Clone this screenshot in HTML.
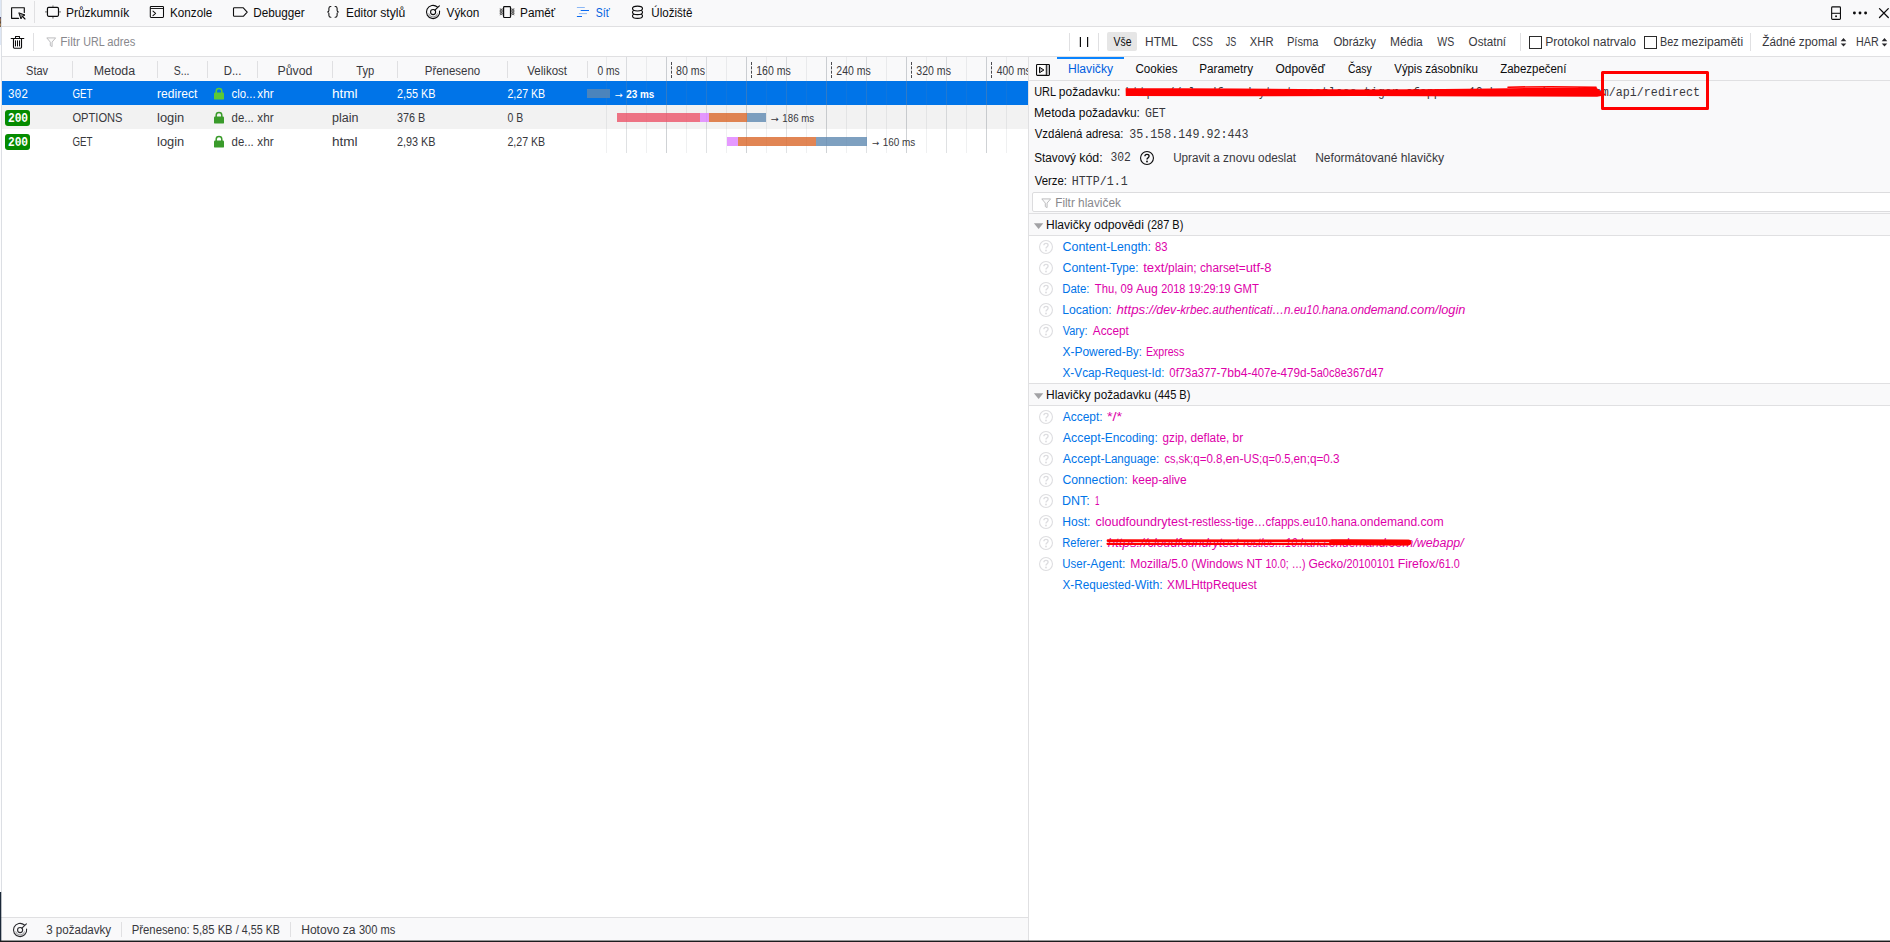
<!DOCTYPE html>
<html lang="cs">
<head>
<meta charset="utf-8">
<title>Síť – Nástroje pro vývojáře</title>
<style>
html,body{margin:0;padding:0;}
body{width:1890px;height:942px;overflow:hidden;position:relative;background:#fff;font-family:"Liberation Sans",sans-serif;font-size:12px;}
.b{position:absolute;}
#txt span{position:absolute;white-space:pre;line-height:16px;height:16px;transform-origin:0 50%;}
#txt u{display:inline-block;text-decoration:none;transform-origin:0 50%;white-space:pre;}
svg{position:absolute;overflow:visible;}
.ln{position:absolute;background:#e0e0e2;}
</style>
</head>
<body>
<!-- backgrounds -->
<div class="b" style="left:0;top:0;width:1890px;height:26px;background:#f9f9fa"></div>
<div class="ln" style="left:0;top:26px;width:1890px;height:1px"></div>
<div class="b" style="left:0;top:27px;width:1890px;height:29px;background:#fff"></div>
<div class="ln" style="left:0;top:56px;width:1890px;height:1px"></div>
<!-- request list header -->
<div class="b" style="left:0;top:57px;width:1028px;height:24px;background:#f9f9fa"></div>
<!-- rows -->
<div class="b" style="left:2px;top:81px;width:1026px;height:24px;background:#0074e8"></div>
<div class="b" style="left:2px;top:105px;width:1026px;height:24px;background:#f2f2f2"></div>
<div class="b" style="left:606px;top:57px;width:1px;height:96px;background:rgba(128,136,144,0.125)"></div>
<div class="b" style="left:626px;top:57px;width:1px;height:96px;background:rgba(128,136,144,0.25)"></div>
<div class="b" style="left:646px;top:57px;width:1px;height:96px;background:rgba(128,136,144,0.125)"></div>
<div class="b" style="left:666px;top:57px;width:1px;height:96px;background:rgba(128,136,144,0.376)"></div>
<div class="b" style="left:686px;top:57px;width:1px;height:96px;background:rgba(128,136,144,0.125)"></div>
<div class="b" style="left:706px;top:57px;width:1px;height:96px;background:rgba(128,136,144,0.25)"></div>
<div class="b" style="left:726px;top:57px;width:1px;height:96px;background:rgba(128,136,144,0.125)"></div>
<div class="b" style="left:746px;top:57px;width:1px;height:96px;background:rgba(128,136,144,0.376)"></div>
<div class="b" style="left:766px;top:57px;width:1px;height:96px;background:rgba(128,136,144,0.125)"></div>
<div class="b" style="left:786px;top:57px;width:1px;height:96px;background:rgba(128,136,144,0.25)"></div>
<div class="b" style="left:806px;top:57px;width:1px;height:96px;background:rgba(128,136,144,0.125)"></div>
<div class="b" style="left:826px;top:57px;width:1px;height:96px;background:rgba(128,136,144,0.376)"></div>
<div class="b" style="left:846px;top:57px;width:1px;height:96px;background:rgba(128,136,144,0.125)"></div>
<div class="b" style="left:866px;top:57px;width:1px;height:96px;background:rgba(128,136,144,0.25)"></div>
<div class="b" style="left:886px;top:57px;width:1px;height:96px;background:rgba(128,136,144,0.125)"></div>
<div class="b" style="left:906px;top:57px;width:1px;height:96px;background:rgba(128,136,144,0.376)"></div>
<div class="b" style="left:926px;top:57px;width:1px;height:96px;background:rgba(128,136,144,0.125)"></div>
<div class="b" style="left:946px;top:57px;width:1px;height:96px;background:rgba(128,136,144,0.25)"></div>
<div class="b" style="left:966px;top:57px;width:1px;height:96px;background:rgba(128,136,144,0.125)"></div>
<div class="b" style="left:986px;top:57px;width:1px;height:96px;background:rgba(128,136,144,0.376)"></div>
<div class="b" style="left:1006px;top:57px;width:1px;height:96px;background:rgba(128,136,144,0.125)"></div>
<div class="b" style="left:671px;top:62px;width:0;height:16px;border-left:1px dashed #4a4a4f"></div>
<div class="b" style="left:751px;top:62px;width:0;height:16px;border-left:1px dashed #4a4a4f"></div>
<div class="b" style="left:831px;top:62px;width:0;height:16px;border-left:1px dashed #4a4a4f"></div>
<div class="b" style="left:911px;top:62px;width:0;height:16px;border-left:1px dashed #4a4a4f"></div>
<div class="b" style="left:991px;top:62px;width:0;height:16px;border-left:1px dashed #4a4a4f"></div>
<div class="b" style="left:587px;top:89px;width:23px;height:9px;background:rgba(94,136,176,0.8)"></div>
<div class="b" style="left:617px;top:113px;width:83px;height:9px;background:rgba(235,83,104,0.8)"></div>
<div class="b" style="left:700px;top:113px;width:9px;height:9px;background:rgba(223,128,255,0.8)"></div>
<div class="b" style="left:709px;top:113px;width:38px;height:9px;background:rgba(217,102,41,0.8)"></div>
<div class="b" style="left:747px;top:113px;width:19px;height:9px;background:rgba(94,136,176,0.8)"></div>
<div class="b" style="left:727px;top:137px;width:11px;height:9px;background:rgba(223,128,255,0.8)"></div>
<div class="b" style="left:738px;top:137px;width:78px;height:9px;background:rgba(217,102,41,0.8)"></div>
<div class="b" style="left:816px;top:137px;width:51px;height:9px;background:rgba(94,136,176,0.8)"></div>
<!-- header dividers -->
<div class="ln" style="left:72px;top:61px;width:1px;height:17px"></div>
<div class="ln" style="left:157px;top:61px;width:1px;height:17px"></div>
<div class="ln" style="left:207px;top:61px;width:1px;height:17px"></div>
<div class="ln" style="left:257px;top:61px;width:1px;height:17px"></div>
<div class="ln" style="left:332px;top:61px;width:1px;height:17px"></div>
<div class="ln" style="left:397px;top:61px;width:1px;height:17px"></div>
<div class="ln" style="left:507px;top:61px;width:1px;height:17px"></div>
<div class="ln" style="left:587px;top:61px;width:1px;height:17px"></div>
<!-- status bar -->
<div class="ln" style="left:0;top:917px;width:1028px;height:1px"></div>
<div class="b" style="left:0;top:918px;width:1028px;height:23px;background:#f9f9fa"></div>
<div class="ln" style="left:121px;top:922px;width:1px;height:15px"></div>
<div class="ln" style="left:290px;top:922px;width:1px;height:15px"></div>
<!-- details panel -->
<div class="b" style="left:1029px;top:57px;width:861px;height:23px;background:#f9f9fa"></div>
<div class="ln" style="left:1029px;top:80px;width:861px;height:1px"></div>
<div class="b" style="left:1029px;top:81px;width:861px;height:132px;background:#f9f9fa"></div>
<div class="b" style="left:1057px;top:57px;width:67px;height:2px;background:#0a84ff"></div>
<div class="b" style="left:1032px;top:192px;width:870px;height:20px;background:#fff;border:1px solid #dcdcde;border-radius:2px;box-sizing:border-box"></div>
<div class="ln" style="left:1029px;top:213px;width:861px;height:1px"></div>
<div class="b" style="left:1029px;top:214px;width:861px;height:21px;background:#f9f9fa"></div>
<div class="ln" style="left:1029px;top:235px;width:861px;height:1px"></div>
<div class="ln" style="left:1029px;top:383px;width:861px;height:1px"></div>
<div class="b" style="left:1029px;top:384px;width:861px;height:21px;background:#f9f9fa"></div>
<div class="ln" style="left:1029px;top:405px;width:861px;height:1px"></div>
<div class="ln" style="left:1028px;top:57px;width:1px;height:884px"></div>
<!-- filter buttons -->
<div class="b" style="left:1107px;top:32px;width:30px;height:19px;background:#e6e6e6;border-radius:2px"></div>
<div class="ln" style="left:1069px;top:33px;width:1px;height:18px"></div>
<div class="ln" style="left:1098px;top:33px;width:1px;height:18px"></div>
<div class="ln" style="left:1520px;top:33px;width:1px;height:18px"></div>
<div class="ln" style="left:1750px;top:33px;width:1px;height:18px"></div>
<div class="ln" style="left:33px;top:33px;width:1px;height:18px"></div>
<div class="ln" style="left:34px;top:1px;width:1px;height:22px"></div>
<div class="b" style="left:1529px;top:36px;width:13px;height:13px;box-sizing:border-box;border:1px solid #2b2b2b;background:#fff"></div>
<div class="b" style="left:1644px;top:36px;width:13px;height:13px;box-sizing:border-box;border:1px solid #2b2b2b;background:#fff"></div>
<!-- status badges -->
<div class="b" style="left:5px;top:110px;width:25px;height:16px;background:#058b00;border-radius:3px"></div>
<div class="b" style="left:5px;top:134px;width:25px;height:16px;background:#058b00;border-radius:3px"></div>
<!-- left/bottom window edges -->
<div class="b" style="left:0;top:0;width:1px;height:892px;background:#fdfdfe"></div>
<div class="b" style="left:0;top:0;width:1px;height:45px;background:#dde6f4"></div>
<div class="b" style="left:0;top:17px;width:1px;height:10px;background:linear-gradient(#3a3f7a,#a07850 30%,#5a4a40 55%,#b08858 75%,#6a5a50)"></div>
<div class="b" style="left:1px;top:0;width:1px;height:892px;background:#dcdfe4"></div>
<div class="b" style="left:0;top:892px;width:1px;height:50px;background:#1b2838"></div>
<div class="b" style="left:1px;top:892px;width:1px;height:50px;background:rgba(27,40,56,0.3)"></div>
<div class="b" style="left:0;top:940px;width:1890px;height:1px;background:rgba(28,28,30,0.45)"></div>
<div class="b" style="left:0;top:941px;width:1890px;height:1px;background:#1c1c1e"></div>
<svg style="left:8px;top:4px" width="20" height="18" viewBox="0 0 20 18" ><path d="M10.6 14.3H3.6V3.7H16.3V8.4" fill="none" stroke="#0c0c0d" stroke-width="1.15" stroke-linejoin="round" stroke-linecap="round"/><path d="M10.8 8.8L17 11L14.4 12.3L13 14.9Z" fill="#8a8a8a" stroke="#0c0c0d" stroke-width="1" stroke-linejoin="round"/><path d="M14.6 12.5L17 15" stroke="#0c0c0d" stroke-width="1.1" stroke-linecap="round"/></svg>
<svg style="left:44px;top:4px" width="18" height="16" viewBox="0 0 18 16" ><rect x="3.45" y="3.45" width="11.05" height="8.85" rx="1.2" fill="none" stroke="#0c0c0d" stroke-width="1.2"/><path d="M8.95 1.4V3M8.95 12.9V14.5M1.2 7.9H2.9M15.1 7.9H16.8" stroke="#6a6a6a" stroke-width="1.1"/></svg>
<svg style="left:148px;top:4px" width="18" height="16" viewBox="0 0 18 16" ><rect x="2.3" y="2.5" width="13.2" height="10.9" rx="0.8" fill="none" stroke="#0c0c0d" stroke-width="1.05"/><path d="M2.3 4.5H15.5" stroke="#0c0c0d" stroke-width="0.9"/><path d="M5 7.1L7.6 9.3L5 11.6" fill="none" stroke="#0c0c0d" stroke-width="1.05" stroke-linecap="round" stroke-linejoin="round"/></svg>
<svg style="left:231px;top:4px" width="19" height="16" viewBox="0 0 19 16" ><path d="M3.3 3.8H12.3L16.2 8.05L12.3 12.3H3.3Q2.5 12.3 2.5 11.5V4.6Q2.5 3.8 3.3 3.8Z" fill="none" stroke="#0c0c0d" stroke-width="1.1" stroke-linejoin="round"/></svg>
<svg style="left:325px;top:4px" width="16" height="16" viewBox="0 0 16 16" ><path d="M5.9 2.5Q3.9 2.5 3.9 4.3V6.4Q3.9 7.9 2.2 7.9Q3.9 7.9 3.9 9.4V11.5Q3.9 13.3 5.9 13.3" fill="none" stroke="#0c0c0d" stroke-width="1.05" stroke-linecap="round"/><path d="M10.1 2.5Q12.1 2.5 12.1 4.3V6.4Q12.1 7.9 13.8 7.9Q12.1 7.9 12.1 9.4V11.5Q12.1 13.3 10.1 13.3" fill="none" stroke="#0c0c0d" stroke-width="1.05" stroke-linecap="round"/></svg>
<svg style="left:425px;top:4px" width="17" height="17" viewBox="0 0 17 17" ><path d="M12.4 3.0A6.6 6.6 0 1 0 14.6 7.0" fill="none" stroke="#0c0c0d" stroke-width="1.1" stroke-linecap="round"/><circle cx="8.1" cy="8.1" r="2.55" fill="none" stroke="#0c0c0d" stroke-width="1.1"/><path d="M9.9 6.2L14.4 1.8" stroke="#0c0c0d" stroke-width="1.1" stroke-linecap="round"/><path d="M3.7 9.4A4.5 4.5 0 0 0 12.5 9.4" fill="none" stroke="#0c0c0d" stroke-width="0.8" opacity="0.55"/><path d="M2.9 10.6A5.5 5.5 0 0 0 13.3 10.6" fill="none" stroke="#0c0c0d" stroke-width="0.7" opacity="0.4"/></svg>
<svg style="left:498px;top:4px" width="18" height="16" viewBox="0 0 18 16" ><rect x="5.6" y="2.6" width="6.9" height="10.9" rx="0.8" fill="none" stroke="#0c0c0d" stroke-width="1.2"/><path d="M1.8 4.6L4.8 6.2L1.8 7.8L4.8 9.4L1.8 11M16.3 4.6L13.3 6.2L16.3 7.8L13.3 9.4L16.3 11" fill="none" stroke="#555" stroke-width="0.9"/><path d="M4.8 4.6L1.8 6.2L4.8 7.8L1.8 9.4L4.8 11M13.3 4.6L16.3 6.2L13.3 7.8L16.3 9.4L13.3 11" fill="none" stroke="#555" stroke-width="0.9"/></svg>
<svg style="left:576px;top:4px" width="14" height="16" viewBox="0 0 14 16" ><path d="M0.9 3.5H8.8" stroke="#0a6af0" stroke-width="1" opacity="0.45"/><path d="M4.7 6.5H13" stroke="#0a6af0" stroke-width="1.05"/><path d="M2.9 9.6H11" stroke="#0a6af0" stroke-width="1" opacity="0.45"/><path d="M0.9 12.5H6" stroke="#0a6af0" stroke-width="1.05"/></svg>
<svg style="left:630px;top:4px" width="16" height="16" viewBox="0 0 16 16" ><ellipse cx="7.5" cy="11.9" rx="5.0" ry="2.45" fill="#f9f9fa" stroke="#0c0c0d" stroke-width="1.15"/><ellipse cx="7.5" cy="8.2" rx="5.0" ry="2.45" fill="#f9f9fa" stroke="#0c0c0d" stroke-width="1.15"/><ellipse cx="7.5" cy="4.5" rx="5.0" ry="2.45" fill="#f9f9fa" stroke="#0c0c0d" stroke-width="1.15"/></svg>
<svg style="left:9px;top:33px" width="18" height="18" viewBox="0 0 18 18" ><path d="M2.2 5.5H14.8" stroke="#0c0c0d" stroke-width="1.1" stroke-linecap="round"/><path d="M6.5 5.3V3.5H10.5V5.3" fill="none" stroke="#0c0c0d" stroke-width="1.05" stroke-linejoin="round"/><path d="M4.5 5.8V14.3Q4.5 15.2 5.4 15.2H11.6Q12.5 15.2 12.5 14.3V5.8" fill="none" stroke="#0c0c0d" stroke-width="1.15"/><path d="M6.5 7.4V13.4M8.5 7.4V13.4M10.5 7.4V13.4" stroke="#0c0c0d" stroke-width="1"/></svg>
<svg style="left:46.2px;top:36.9px" width="11" height="11" viewBox="0 0 11 11" ><path d="M0.8 0.9H9.6L6.1 5.1V9.6L4.3 8.6V5.1Z" fill="#fbfbfb" stroke="#b9b9bc" stroke-width="0.95" stroke-linejoin="round"/></svg>
<svg style="left:1041.2px;top:198.2px" width="11" height="11" viewBox="0 0 11 11" ><path d="M0.8 0.9H9.6L6.1 5.1V9.6L4.3 8.6V5.1Z" fill="#fbfbfb" stroke="#b9b9bc" stroke-width="0.95" stroke-linejoin="round"/></svg>
<svg style="left:1829px;top:4px" width="14" height="18" viewBox="0 0 14 18" ><rect x="2.65" y="2.85" width="8.8" height="12.5" rx="0.9" fill="none" stroke="#0c0c0d" stroke-width="1.1"/><path d="M2.65 9.3H11.45" stroke="#0c0c0d" stroke-width="1.05"/><circle cx="7.05" cy="12.3" r="0.95" fill="#0c0c0d"/></svg>
<svg style="left:1851px;top:9px" width="18" height="8" viewBox="0 0 18 8" ><circle cx="3.4" cy="4" r="1.45" fill="#0c0c0d"/><circle cx="9" cy="4" r="1.45" fill="#0c0c0d"/><circle cx="14.6" cy="4" r="1.45" fill="#0c0c0d"/></svg>
<svg style="left:1877px;top:6px" width="13" height="14" viewBox="0 0 13 14" ><path d="M2.5 2.6L11.3 11.5M11.3 2.6L2.5 11.5" stroke="#0c0c0d" stroke-width="1.3" stroke-linecap="round"/></svg>
<svg style="left:1078px;top:34px" width="12" height="16" viewBox="0 0 12 16" ><path d="M2.4 3V13M9.6 3V13" stroke="#0c0c0d" stroke-width="1.2"/></svg>
<svg style="left:1840.2px;top:37px" width="7" height="11" viewBox="0 0 7 11" ><path d="M3.5 0.9L6.3 4.2H0.7ZM3.5 9.5L6.3 6.6H0.7Z" fill="#2a2a2e"/></svg>
<svg style="left:1881.2px;top:37px" width="7" height="11" viewBox="0 0 7 11" ><path d="M3.5 0.9L6.3 4.2H0.7ZM3.5 9.5L6.3 6.6H0.7Z" fill="#2a2a2e"/></svg>
<svg style="left:1034px;top:62px" width="18" height="16" viewBox="0 0 18 16" ><rect x="2.55" y="2.55" width="12.9" height="10.85" rx="0.8" fill="#fff" stroke="#0c0c0d" stroke-width="1.1"/><rect x="12.6" y="3.1" width="2.3" height="9.8" fill="#b4b4b6"/><path d="M12.3 2.6V13.4" stroke="#0c0c0d" stroke-width="1"/><path d="M5.5 5.2L9.9 8L5.5 10.8Z" fill="#b4b4b6" stroke="#0c0c0d" stroke-width="1" stroke-linejoin="round"/></svg>
<svg style="left:1139.05px;top:150px" width="16" height="16" viewBox="0 0 16 16" ><g opacity="1"><circle cx="8" cy="8" r="6.45" fill="none" stroke="#0c0c0d" stroke-width="1.1"/><path d="M5.9 6.3Q5.9 4.3 8 4.3Q10.1 4.3 10.1 6.1Q10.1 7.2 9 7.9Q8 8.5 8 9.6" fill="none" stroke="#0c0c0d" stroke-width="1.35"/><circle cx="8" cy="11.5" r="0.9" fill="#0c0c0d"/></g></svg>
<svg style="left:1038px;top:238.9px" width="16" height="16" viewBox="0 0 16 16" ><g opacity="1"><circle cx="8" cy="8" r="6.45" fill="none" stroke="#dddde0" stroke-width="1.1"/><path d="M5.9 6.3Q5.9 4.3 8 4.3Q10.1 4.3 10.1 6.1Q10.1 7.2 9 7.9Q8 8.5 8 9.6" fill="none" stroke="#dddde0" stroke-width="1.35"/><circle cx="8" cy="11.5" r="0.9" fill="#dddde0"/></g></svg>
<svg style="left:1038px;top:259.9px" width="16" height="16" viewBox="0 0 16 16" ><g opacity="1"><circle cx="8" cy="8" r="6.45" fill="none" stroke="#dddde0" stroke-width="1.1"/><path d="M5.9 6.3Q5.9 4.3 8 4.3Q10.1 4.3 10.1 6.1Q10.1 7.2 9 7.9Q8 8.5 8 9.6" fill="none" stroke="#dddde0" stroke-width="1.35"/><circle cx="8" cy="11.5" r="0.9" fill="#dddde0"/></g></svg>
<svg style="left:1038px;top:280.9px" width="16" height="16" viewBox="0 0 16 16" ><g opacity="1"><circle cx="8" cy="8" r="6.45" fill="none" stroke="#dddde0" stroke-width="1.1"/><path d="M5.9 6.3Q5.9 4.3 8 4.3Q10.1 4.3 10.1 6.1Q10.1 7.2 9 7.9Q8 8.5 8 9.6" fill="none" stroke="#dddde0" stroke-width="1.35"/><circle cx="8" cy="11.5" r="0.9" fill="#dddde0"/></g></svg>
<svg style="left:1038px;top:301.9px" width="16" height="16" viewBox="0 0 16 16" ><g opacity="1"><circle cx="8" cy="8" r="6.45" fill="none" stroke="#dddde0" stroke-width="1.1"/><path d="M5.9 6.3Q5.9 4.3 8 4.3Q10.1 4.3 10.1 6.1Q10.1 7.2 9 7.9Q8 8.5 8 9.6" fill="none" stroke="#dddde0" stroke-width="1.35"/><circle cx="8" cy="11.5" r="0.9" fill="#dddde0"/></g></svg>
<svg style="left:1038px;top:322.9px" width="16" height="16" viewBox="0 0 16 16" ><g opacity="1"><circle cx="8" cy="8" r="6.45" fill="none" stroke="#dddde0" stroke-width="1.1"/><path d="M5.9 6.3Q5.9 4.3 8 4.3Q10.1 4.3 10.1 6.1Q10.1 7.2 9 7.9Q8 8.5 8 9.6" fill="none" stroke="#dddde0" stroke-width="1.35"/><circle cx="8" cy="11.5" r="0.9" fill="#dddde0"/></g></svg>
<svg style="left:1038px;top:408.9px" width="16" height="16" viewBox="0 0 16 16" ><g opacity="1"><circle cx="8" cy="8" r="6.45" fill="none" stroke="#dddde0" stroke-width="1.1"/><path d="M5.9 6.3Q5.9 4.3 8 4.3Q10.1 4.3 10.1 6.1Q10.1 7.2 9 7.9Q8 8.5 8 9.6" fill="none" stroke="#dddde0" stroke-width="1.35"/><circle cx="8" cy="11.5" r="0.9" fill="#dddde0"/></g></svg>
<svg style="left:1038px;top:429.9px" width="16" height="16" viewBox="0 0 16 16" ><g opacity="1"><circle cx="8" cy="8" r="6.45" fill="none" stroke="#dddde0" stroke-width="1.1"/><path d="M5.9 6.3Q5.9 4.3 8 4.3Q10.1 4.3 10.1 6.1Q10.1 7.2 9 7.9Q8 8.5 8 9.6" fill="none" stroke="#dddde0" stroke-width="1.35"/><circle cx="8" cy="11.5" r="0.9" fill="#dddde0"/></g></svg>
<svg style="left:1038px;top:450.9px" width="16" height="16" viewBox="0 0 16 16" ><g opacity="1"><circle cx="8" cy="8" r="6.45" fill="none" stroke="#dddde0" stroke-width="1.1"/><path d="M5.9 6.3Q5.9 4.3 8 4.3Q10.1 4.3 10.1 6.1Q10.1 7.2 9 7.9Q8 8.5 8 9.6" fill="none" stroke="#dddde0" stroke-width="1.35"/><circle cx="8" cy="11.5" r="0.9" fill="#dddde0"/></g></svg>
<svg style="left:1038px;top:471.9px" width="16" height="16" viewBox="0 0 16 16" ><g opacity="1"><circle cx="8" cy="8" r="6.45" fill="none" stroke="#dddde0" stroke-width="1.1"/><path d="M5.9 6.3Q5.9 4.3 8 4.3Q10.1 4.3 10.1 6.1Q10.1 7.2 9 7.9Q8 8.5 8 9.6" fill="none" stroke="#dddde0" stroke-width="1.35"/><circle cx="8" cy="11.5" r="0.9" fill="#dddde0"/></g></svg>
<svg style="left:1038px;top:492.9px" width="16" height="16" viewBox="0 0 16 16" ><g opacity="1"><circle cx="8" cy="8" r="6.45" fill="none" stroke="#dddde0" stroke-width="1.1"/><path d="M5.9 6.3Q5.9 4.3 8 4.3Q10.1 4.3 10.1 6.1Q10.1 7.2 9 7.9Q8 8.5 8 9.6" fill="none" stroke="#dddde0" stroke-width="1.35"/><circle cx="8" cy="11.5" r="0.9" fill="#dddde0"/></g></svg>
<svg style="left:1038px;top:513.9px" width="16" height="16" viewBox="0 0 16 16" ><g opacity="1"><circle cx="8" cy="8" r="6.45" fill="none" stroke="#dddde0" stroke-width="1.1"/><path d="M5.9 6.3Q5.9 4.3 8 4.3Q10.1 4.3 10.1 6.1Q10.1 7.2 9 7.9Q8 8.5 8 9.6" fill="none" stroke="#dddde0" stroke-width="1.35"/><circle cx="8" cy="11.5" r="0.9" fill="#dddde0"/></g></svg>
<svg style="left:1038px;top:534.9px" width="16" height="16" viewBox="0 0 16 16" ><g opacity="1"><circle cx="8" cy="8" r="6.45" fill="none" stroke="#dddde0" stroke-width="1.1"/><path d="M5.9 6.3Q5.9 4.3 8 4.3Q10.1 4.3 10.1 6.1Q10.1 7.2 9 7.9Q8 8.5 8 9.6" fill="none" stroke="#dddde0" stroke-width="1.35"/><circle cx="8" cy="11.5" r="0.9" fill="#dddde0"/></g></svg>
<svg style="left:1038px;top:555.9px" width="16" height="16" viewBox="0 0 16 16" ><g opacity="1"><circle cx="8" cy="8" r="6.45" fill="none" stroke="#dddde0" stroke-width="1.1"/><path d="M5.9 6.3Q5.9 4.3 8 4.3Q10.1 4.3 10.1 6.1Q10.1 7.2 9 7.9Q8 8.5 8 9.6" fill="none" stroke="#dddde0" stroke-width="1.35"/><circle cx="8" cy="11.5" r="0.9" fill="#dddde0"/></g></svg>
<svg style="left:1033px;top:221.9px" width="12" height="8" viewBox="0 0 12 8" ><path d="M0.9 1.2H10.3L5.6 6.9Z" fill="#a2a2a5"/></svg>
<svg style="left:1033px;top:391.8px" width="12" height="8" viewBox="0 0 12 8" ><path d="M0.9 1.2H10.3L5.6 6.9Z" fill="#a2a2a5"/></svg>
<svg style="left:213px;top:87px" width="12" height="14" viewBox="0 0 12 14" ><rect x="1" y="5.4" width="10" height="7.2" rx="1.2" fill="#5cc935"/><path d="M3.2 6V4.2Q3.2 1.6 6 1.6Q8.8 1.6 8.8 4.2V6" fill="none" stroke="#5cc935" stroke-width="1.5"/></svg>
<svg style="left:213px;top:111px" width="12" height="14" viewBox="0 0 12 14" ><rect x="1" y="5.4" width="10" height="7.2" rx="1.2" fill="#3a9b2b"/><path d="M3.2 6V4.2Q3.2 1.6 6 1.6Q8.8 1.6 8.8 4.2V6" fill="none" stroke="#3a9b2b" stroke-width="1.5"/></svg>
<svg style="left:213px;top:135px" width="12" height="14" viewBox="0 0 12 14" ><rect x="1" y="5.4" width="10" height="7.2" rx="1.2" fill="#3a9b2b"/><path d="M3.2 6V4.2Q3.2 1.6 6 1.6Q8.8 1.6 8.8 4.2V6" fill="none" stroke="#3a9b2b" stroke-width="1.5"/></svg>
<svg style="left:12px;top:921.5px" width="17" height="17" viewBox="0 0 17 17" ><path d="M12.4 3.0A6.6 6.6 0 1 0 14.6 7.0" fill="none" stroke="#2a2a2e" stroke-width="1.1" stroke-linecap="round"/><circle cx="8.1" cy="8.1" r="2.55" fill="none" stroke="#2a2a2e" stroke-width="1.1"/><path d="M9.9 6.2L14.4 1.8" stroke="#2a2a2e" stroke-width="1.1" stroke-linecap="round"/><path d="M3.7 9.4A4.5 4.5 0 0 0 12.5 9.4" fill="none" stroke="#2a2a2e" stroke-width="0.8" opacity="0.55"/><path d="M2.9 10.6A5.5 5.5 0 0 0 13.3 10.6" fill="none" stroke="#2a2a2e" stroke-width="0.7" opacity="0.4"/></svg>
<div id="txt">
<span style="left:65px;top:5px;color:#0c0c0d;font-family:'Liberation Sans',sans-serif;font-size:12px;transform:translateX(0.88px) scaleX(0.9999);">Průzkumník</span>
<span style="left:169px;top:5px;color:#0c0c0d;font-family:'Liberation Sans',sans-serif;font-size:12px;transform:translateX(0.99px) scaleX(0.9751);">Konzole</span>
<span style="left:253px;top:5px;color:#0c0c0d;font-family:'Liberation Sans',sans-serif;font-size:12px;transform:translateX(0.20px) scaleX(0.9770);">Debugger</span>
<span style="left:346px;top:5px;color:#0c0c0d;font-family:'Liberation Sans',sans-serif;font-size:12px;transform:translateX(0.09px) scaleX(1.0029);"><u style="width:34.00px;transform:scaleX(0.9802)">Editor </u><u style="width:25.00px;transform:scaleX(1.0127)">stylů</u></span>
<span style="left:446px;top:5px;color:#0c0c0d;font-family:'Liberation Sans',sans-serif;font-size:12px;transform:translateX(0.52px) scaleX(0.9825);">Výkon</span>
<span style="left:520px;top:5px;color:#0c0c0d;font-family:'Liberation Sans',sans-serif;font-size:12px;transform:translateX(0.09px) scaleX(0.9805);">Paměť</span>
<span style="left:595px;top:5px;color:#0060df;font-family:'Liberation Sans',sans-serif;font-size:12px;transform:translateX(0.84px) scaleX(0.8760);">Síť</span>
<span style="left:651px;top:5px;color:#0c0c0d;font-family:'Liberation Sans',sans-serif;font-size:12px;transform:translateX(0.25px) scaleX(0.9667);">Úložiště</span>
<span style="left:60px;top:34px;color:#88888d;font-family:'Liberation Sans',sans-serif;font-size:12px;transform:translateX(0.28px) scaleX(1.0005);"><u style="width:23.00px;transform:scaleX(0.9859)">Filtr </u><u style="width:24.00px;transform:scaleX(0.8920)">URL </u><u style="width:28.00px;transform:scaleX(0.9324)">adres</u></span>
<span style="left:1113px;top:34px;color:#0c0c0d;font-family:'Liberation Sans',sans-serif;font-size:12px;transform:translateX(0.52px) scaleX(0.8690);">Vše</span>
<span style="left:1145px;top:34px;color:#38383d;font-family:'Liberation Sans',sans-serif;font-size:12px;transform:translateX(0.09px) scaleX(0.9923);">HTML</span>
<span style="left:1192px;top:34px;color:#38383d;font-family:'Liberation Sans',sans-serif;font-size:12px;transform:translateX(0.33px) scaleX(0.8295);">CSS</span>
<span style="left:1225px;top:34px;color:#38383d;font-family:'Liberation Sans',sans-serif;font-size:12px;transform:translateX(0.83px) scaleX(0.7460);">JS</span>
<span style="left:1249px;top:34px;color:#38383d;font-family:'Liberation Sans',sans-serif;font-size:12px;transform:translateX(0.83px) scaleX(0.9351);">XHR</span>
<span style="left:1286px;top:34px;color:#38383d;font-family:'Liberation Sans',sans-serif;font-size:12px;transform:translateX(0.93px) scaleX(0.9267);">Písma</span>
<span style="left:1333px;top:34px;color:#38383d;font-family:'Liberation Sans',sans-serif;font-size:12px;transform:translateX(0.43px) scaleX(0.9520);">Obrázky</span>
<span style="left:1390px;top:34px;color:#38383d;font-family:'Liberation Sans',sans-serif;font-size:12px;transform:translateX(0.08px) scaleX(0.9995);">Média</span>
<span style="left:1437px;top:34px;color:#38383d;font-family:'Liberation Sans',sans-serif;font-size:12px;transform:translateX(0.34px) scaleX(0.8758);">WS</span>
<span style="left:1468px;top:34px;color:#38383d;font-family:'Liberation Sans',sans-serif;font-size:12px;transform:translateX(0.61px) scaleX(0.9684);">Ostatní</span>
<span style="left:1545px;top:34px;color:#38383d;font-family:'Liberation Sans',sans-serif;font-size:12px;transform:translateX(0.18px) scaleX(0.9978);"><u style="width:48.00px;transform:scaleX(1.0135)">Protokol </u><u style="width:43.00px;transform:scaleX(1.0070)">natrvalo</u></span>
<span style="left:1659px;top:34px;color:#38383d;font-family:'Liberation Sans',sans-serif;font-size:12px;transform:translateX(0.95px) scaleX(1.0269);"><u style="width:21.00px;transform:scaleX(0.8744)">Bez </u><u style="width:60.00px;transform:scaleX(0.9778)">mezipaměti</u></span>
<span style="left:1762px;top:34px;color:#38383d;font-family:'Liberation Sans',sans-serif;font-size:12px;transform:translateX(0.22px) scaleX(1.0132);"><u style="width:36.00px;transform:scaleX(0.9636)">Žádné </u><u style="width:38.00px;transform:scaleX(0.9822)">zpomal</u></span>
<span style="left:1856px;top:34px;color:#38383d;font-family:'Liberation Sans',sans-serif;font-size:12px;transform:translateX(0.04px) scaleX(0.8919);">HAR</span>
<span style="left:26px;top:63px;color:#38383d;font-family:'Liberation Sans',sans-serif;font-size:12px;transform:translateX(0.01px) scaleX(0.9206);">Stav</span>
<span style="left:93px;top:63px;color:#38383d;font-family:'Liberation Sans',sans-serif;font-size:12px;transform:translateX(0.74px) scaleX(1.0332);">Metoda</span>
<span style="left:173px;top:63px;color:#38383d;font-family:'Liberation Sans',sans-serif;font-size:12px;transform:translateX(0.84px) scaleX(0.8708);">S...</span>
<span style="left:223px;top:63px;color:#38383d;font-family:'Liberation Sans',sans-serif;font-size:12px;transform:translateX(0.72px) scaleX(0.9496);">D...</span>
<span style="left:277px;top:63px;color:#38383d;font-family:'Liberation Sans',sans-serif;font-size:12px;transform:translateX(0.54px) scaleX(1.0257);">Původ</span>
<span style="left:356px;top:63px;color:#38383d;font-family:'Liberation Sans',sans-serif;font-size:12px;transform:translateX(0.33px) scaleX(0.9299);">Typ</span>
<span style="left:424px;top:63px;color:#38383d;font-family:'Liberation Sans',sans-serif;font-size:12px;transform:translateX(0.72px) scaleX(0.9567);">Přeneseno</span>
<span style="left:527px;top:63px;color:#38383d;font-family:'Liberation Sans',sans-serif;font-size:12px;transform:translateX(0.32px) scaleX(0.9598);">Velikost</span>
<span style="left:597px;top:63px;color:#38383d;font-family:'Liberation Sans',sans-serif;font-size:12px;transform:translateX(0.43px) scaleX(0.8538);">0 ms</span>
<span style="left:676px;top:63px;color:#38383d;font-family:'Liberation Sans',sans-serif;font-size:12px;transform:translateX(0.08px) scaleX(0.8831);">80 ms</span>
<span style="left:756px;top:63px;color:#38383d;font-family:'Liberation Sans',sans-serif;font-size:12px;transform:translateX(0.21px) scaleX(0.8783);">160 ms</span>
<span style="left:836px;top:63px;color:#38383d;font-family:'Liberation Sans',sans-serif;font-size:12px;transform:translateX(0.33px) scaleX(0.8748);">240 ms</span>
<span style="left:916px;top:63px;color:#38383d;font-family:'Liberation Sans',sans-serif;font-size:12px;transform:translateX(0.37px) scaleX(0.8775);">320 ms</span>
<div style="position:absolute;left:0;top:0;width:1028px;height:200px;overflow:hidden"><span style="left:996px;top:63px;color:#38383d;font-family:'Liberation Sans',sans-serif;font-size:12px;transform:translateX(0.73px) scaleX(0.8644);">400 ms</span></div>
<span style="left:7px;top:87px;color:#ffffff;font-family:'Liberation Mono',monospace;font-size:12px;transform:translateX(0.68px) scaleX(0.9493);">302</span>
<span style="left:72px;top:86px;color:#ffffff;font-family:'Liberation Sans',sans-serif;font-size:12px;transform:translateX(0.44px) scaleX(0.8128);">GET</span>
<span style="left:157px;top:86px;color:#ffffff;font-family:'Liberation Sans',sans-serif;font-size:12px;transform:translateX(0.09px) scaleX(1.0041);">redirect</span>
<span style="left:231px;top:86px;color:#ffffff;font-family:'Liberation Sans',sans-serif;font-size:12px;transform:translateX(0.54px) scaleX(0.9493);">clo...</span>
<span style="left:257px;top:86px;color:#ffffff;font-family:'Liberation Sans',sans-serif;font-size:12px;transform:translateX(0.33px) scaleX(0.9729);">xhr</span>
<span style="left:331px;top:86px;color:#ffffff;font-family:'Liberation Sans',sans-serif;font-size:12px;transform:translateX(0.92px) scaleX(1.1324);">html</span>
<span style="left:397px;top:86px;color:#ffffff;font-family:'Liberation Sans',sans-serif;font-size:12px;transform:translateX(0.01px) scaleX(0.9034);">2,55 KB</span>
<span style="left:507px;top:86px;color:#ffffff;font-family:'Liberation Sans',sans-serif;font-size:12px;transform:translateX(0.44px) scaleX(0.8844);">2,27 KB</span>
<span style="left:7px;top:111px;color:#ffffff;font-family:'Liberation Mono',monospace;font-size:12px;font-weight:700;transform:translateX(0.92px) scaleX(0.9313);">200</span>
<span style="left:72px;top:110px;color:#38383d;font-family:'Liberation Sans',sans-serif;font-size:12px;transform:translateX(0.43px) scaleX(0.9274);">OPTIONS</span>
<span style="left:157px;top:110px;color:#38383d;font-family:'Liberation Sans',sans-serif;font-size:12px;transform:translateX(0.05px) scaleX(1.0738);">login</span>
<span style="left:231px;top:110px;color:#38383d;font-family:'Liberation Sans',sans-serif;font-size:12px;transform:translateX(0.59px) scaleX(0.9470);">de...</span>
<span style="left:257px;top:110px;color:#38383d;font-family:'Liberation Sans',sans-serif;font-size:12px;transform:translateX(0.33px) scaleX(0.9729);">xhr</span>
<span style="left:331px;top:110px;color:#38383d;font-family:'Liberation Sans',sans-serif;font-size:12px;transform:translateX(0.98px) scaleX(1.0434);">plain</span>
<span style="left:396px;top:110px;color:#38383d;font-family:'Liberation Sans',sans-serif;font-size:12px;transform:translateX(0.97px) scaleX(0.9002);">376 B</span>
<span style="left:507px;top:110px;color:#38383d;font-family:'Liberation Sans',sans-serif;font-size:12px;transform:translateX(0.53px) scaleX(0.8717);">0 B</span>
<span style="left:7px;top:135px;color:#ffffff;font-family:'Liberation Mono',monospace;font-size:12px;font-weight:700;transform:translateX(0.92px) scaleX(0.9313);">200</span>
<span style="left:72px;top:134px;color:#38383d;font-family:'Liberation Sans',sans-serif;font-size:12px;transform:translateX(0.44px) scaleX(0.8128);">GET</span>
<span style="left:157px;top:134px;color:#38383d;font-family:'Liberation Sans',sans-serif;font-size:12px;transform:translateX(0.05px) scaleX(1.0738);">login</span>
<span style="left:231px;top:134px;color:#38383d;font-family:'Liberation Sans',sans-serif;font-size:12px;transform:translateX(0.59px) scaleX(0.9470);">de...</span>
<span style="left:257px;top:134px;color:#38383d;font-family:'Liberation Sans',sans-serif;font-size:12px;transform:translateX(0.33px) scaleX(0.9729);">xhr</span>
<span style="left:331px;top:134px;color:#38383d;font-family:'Liberation Sans',sans-serif;font-size:12px;transform:translateX(0.92px) scaleX(1.1324);">html</span>
<span style="left:397px;top:134px;color:#38383d;font-family:'Liberation Sans',sans-serif;font-size:12px;transform:translateX(0.01px) scaleX(0.9034);">2,93 KB</span>
<span style="left:507px;top:134px;color:#38383d;font-family:'Liberation Sans',sans-serif;font-size:12px;transform:translateX(0.44px) scaleX(0.8844);">2,27 KB</span>
<span style="left:614px;top:87px;color:#ffffff;font-family:'DejaVu Sans','Liberation Sans',sans-serif;font-size:9px;transform:translateX(0.74px) scaleX(1.0676);">→</span>
<span style="left:626px;top:87px;color:#ffffff;font-family:'Liberation Sans',sans-serif;font-size:10px;font-weight:700;transform:translateX(0.25px) scaleX(0.9904);">23 ms</span>
<span style="left:770px;top:111px;color:#38383d;font-family:'DejaVu Sans','Liberation Sans',sans-serif;font-size:9px;transform:translateX(0.84px) scaleX(1.0676);">→</span>
<span style="left:782px;top:111px;color:#38383d;font-family:'Liberation Sans',sans-serif;font-size:10px;transform:translateX(0.37px) scaleX(0.9692);">186 ms</span>
<span style="left:871px;top:135px;color:#38383d;font-family:'DejaVu Sans','Liberation Sans',sans-serif;font-size:9px;transform:translateX(0.88px) scaleX(0.9647);">→</span>
<span style="left:882px;top:135px;color:#38383d;font-family:'Liberation Sans',sans-serif;font-size:10px;transform:translateX(0.77px) scaleX(0.9901);">160 ms</span>
<span style="left:1067px;top:61px;color:#0060df;font-family:'Liberation Sans',sans-serif;font-size:12px;transform:translateX(0.88px) scaleX(1.0110);">Hlavičky</span>
<span style="left:1135px;top:61px;color:#0c0c0d;font-family:'Liberation Sans',sans-serif;font-size:12px;transform:translateX(0.47px) scaleX(0.9686);">Cookies</span>
<span style="left:1199px;top:61px;color:#0c0c0d;font-family:'Liberation Sans',sans-serif;font-size:12px;transform:translateX(0.19px) scaleX(0.9741);">Parametry</span>
<span style="left:1275px;top:61px;color:#0c0c0d;font-family:'Liberation Sans',sans-serif;font-size:12px;transform:translateX(0.50px) scaleX(0.9967);">Odpověď</span>
<span style="left:1348px;top:61px;color:#0c0c0d;font-family:'Liberation Sans',sans-serif;font-size:12px;transform:translateX(0.03px) scaleX(0.8650);">Časy</span>
<span style="left:1394px;top:61px;color:#0c0c0d;font-family:'Liberation Sans',sans-serif;font-size:12px;transform:translateX(0.32px) scaleX(0.9965);"><u style="width:31.00px;transform:scaleX(0.9484)">Výpis </u><u style="width:53.00px;transform:scaleX(0.9689)">zásobníku</u></span>
<span style="left:1500px;top:61px;color:#0c0c0d;font-family:'Liberation Sans',sans-serif;font-size:12px;transform:translateX(0.23px) scaleX(0.9537);">Zabezpečení</span>
<span style="left:1034px;top:84px;color:#0c0c0d;font-family:'Liberation Sans',sans-serif;font-size:12px;transform:translateX(0.19px) scaleX(1.0249);"><u style="width:24.00px;transform:scaleX(0.8920)">URL </u><u style="width:60.00px;transform:scaleX(0.9773)">požadavku:</u></span>
<span style="left:1125px;top:85px;color:#38383d;font-family:'Liberation Mono',monospace;font-size:12.3px;transform:translateX(0.48px) scaleX(0.9493);">https://cloudfoundrytest-restless-tiger.cfapps.eu10.hana.ondemand.com/api/redirect</span>
<span style="left:1033px;top:105px;color:#0c0c0d;font-family:'Liberation Sans',sans-serif;font-size:12px;transform:translateX(0.93px) scaleX(1.0192);"><u style="width:44.00px;transform:scaleX(1.0148)">Metoda </u><u style="width:60.00px;transform:scaleX(0.9773)">požadavku:</u></span>
<span style="left:1144px;top:106px;color:#38383d;font-family:'Liberation Mono',monospace;font-size:12.3px;transform:translateX(0.94px) scaleX(0.9403);">GET</span>
<span style="left:1034px;top:126px;color:#0c0c0d;font-family:'Liberation Sans',sans-serif;font-size:12px;transform:translateX(0.72px) scaleX(1.0189);"><u style="width:50.00px;transform:scaleX(0.9368)">Vzdálená </u><u style="width:37.00px;transform:scaleX(0.9243)">adresa:</u></span>
<span style="left:1129px;top:127px;color:#38383d;font-family:'Liberation Mono',monospace;font-size:12.3px;transform:translateX(0.28px) scaleX(0.9502);">35.158.149.92:443</span>
<span style="left:1034px;top:150px;color:#0c0c0d;font-family:'Liberation Sans',sans-serif;font-size:12px;transform:translateX(0.19px) scaleX(1.0223);"><u style="width:44.00px;transform:scaleX(0.9559)">Stavový </u><u style="width:23.00px;transform:scaleX(1.0138)">kód:</u></span>
<span style="left:1110px;top:150px;color:#38383d;font-family:'Liberation Mono',monospace;font-size:12.3px;transform:translateX(0.38px) scaleX(0.9248);">302</span>
<span style="left:1173px;top:150px;color:#38383d;font-family:'Liberation Sans',sans-serif;font-size:12px;transform:translateX(0.14px) scaleX(0.9993);"><u style="width:50.00px;transform:scaleX(0.9735)">Upravit a </u><u style="width:35.00px;transform:scaleX(0.9898)">znovu </u><u style="width:38.00px;transform:scaleX(0.9818)">odeslat</u></span>
<span style="left:1315px;top:150px;color:#38383d;font-family:'Liberation Sans',sans-serif;font-size:12px;transform:translateX(0.18px) scaleX(1.0072);"><u style="width:85.00px;transform:scaleX(0.9954)">Neformátované </u><u style="width:43.00px;transform:scaleX(1.0073)">hlavičky</u></span>
<span style="left:1034px;top:173px;color:#0c0c0d;font-family:'Liberation Sans',sans-serif;font-size:12px;transform:translateX(0.72px) scaleX(0.9484);">Verze:</span>
<span style="left:1071px;top:174px;color:#38383d;font-family:'Liberation Mono',monospace;font-size:12.3px;transform:translateX(0.82px) scaleX(0.9454);">HTTP/1.1</span>
<span style="left:1055px;top:195px;color:#88888d;font-family:'Liberation Sans',sans-serif;font-size:12px;transform:translateX(0.19px) scaleX(0.9957);"><u style="width:23.00px;transform:scaleX(0.9859)">Filtr </u><u style="width:43.00px;transform:scaleX(0.9917)">hlaviček</u></span>
<span style="left:1045px;top:217px;color:#0c0c0d;font-family:'Liberation Sans',sans-serif;font-size:12px;transform:translateX(0.98px) scaleX(1.0029);"><u style="width:48.00px;transform:scaleX(0.9997)">Hlavičky </u><u style="width:53.00px;transform:scaleX(1.0183)">odpovědi </u><u style="width:36.00px;transform:scaleX(0.9146)">(287 B)</u></span>
<span style="left:1045px;top:387px;color:#0c0c0d;font-family:'Liberation Sans',sans-serif;font-size:12px;transform:translateX(0.98px) scaleX(1.0027);"><u style="width:48.00px;transform:scaleX(0.9997)">Hlavičky </u><u style="width:60.00px;transform:scaleX(0.9773)">požadavku </u><u style="width:36.00px;transform:scaleX(0.9146)">(445 B)</u></span>
<span style="left:1062px;top:239px;color:#0074e8;font-family:'Liberation Sans',sans-serif;font-size:12px;transform:translateX(0.44px) scaleX(1.0181);"><u style="width:47.00px;transform:scaleX(1.0210)">Content-</u><u style="width:40.00px;transform:scaleX(0.9988)">Length:</u></span>
<span style="left:1155px;top:239px;color:#dd00a9;font-family:'Liberation Sans',sans-serif;font-size:12px;transform:translateX(0.02px) scaleX(0.9381);">83</span>
<span style="left:1062px;top:260px;color:#0074e8;font-family:'Liberation Sans',sans-serif;font-size:12px;transform:translateX(0.44px) scaleX(1.0124);"><u style="width:47.00px;transform:scaleX(1.0210)">Content-</u><u style="width:28.00px;transform:scaleX(0.9537)">Type:</u></span>
<span style="left:1143px;top:260px;color:#dd00a9;font-family:'Liberation Sans',sans-serif;font-size:12px;transform:translateX(0.20px) scaleX(0.9946);"><u style="width:25.00px;transform:scaleX(1.1019)">text/</u><u style="width:32.00px;transform:scaleX(0.9990)">plain; </u><u style="width:46.00px;transform:scaleX(0.9922)">charset=</u><u style="width:26.00px;transform:scaleX(1.0826)">utf-8</u></span>
<span style="left:1062px;top:281px;color:#0074e8;font-family:'Liberation Sans',sans-serif;font-size:12px;transform:translateX(0.22px) scaleX(0.9523);">Date:</span>
<span style="left:1094px;top:281px;color:#dd00a9;font-family:'Liberation Sans',sans-serif;font-size:12px;transform:translateX(0.83px) scaleX(1.0061);"><u style="width:41.00px;transform:scaleX(0.9312)">Thu, 09 </u><u style="width:25.00px;transform:scaleX(1.0127)">Aug </u><u style="width:27.00px;transform:scaleX(0.8991)">2018 </u><u style="width:45.00px;transform:scaleX(0.8992)">19:29:19 </u><u style="width:25.00px;transform:scaleX(0.9373)">GMT</u></span>
<span style="left:1062px;top:302px;color:#0074e8;font-family:'Liberation Sans',sans-serif;font-size:12px;transform:translateX(0.18px) scaleX(1.0136);">Location:</span>
<span style="left:1116px;top:302px;color:#dd00a9;font-family:'Liberation Sans',sans-serif;font-size:12px;font-style:italic;transform:translateX(0.46px) scaleX(0.9969);"><u style="width:40.00px;transform:scaleX(1.1101)">https://</u><u style="width:24.00px;transform:scaleX(1.0281)">dev-</u><u style="width:32.00px;transform:scaleX(0.9790)">krbec.</u><u style="width:82.00px;transform:scaleX(0.9833)">authenticati…n.</u><u style="width:28.00px;transform:scaleX(0.9324)">eu10.</u><u style="width:29.00px;transform:scaleX(0.9657)">hana.</u><u style="width:60.00px;transform:scaleX(0.9992)">ondemand.</u><u style="width:28.00px;transform:scaleX(1.0763)">com/</u><u style="width:27.00px;transform:scaleX(1.0647)">login</u></span>
<span style="left:1062px;top:323px;color:#0074e8;font-family:'Liberation Sans',sans-serif;font-size:12px;transform:translateX(0.83px) scaleX(0.9080);">Vary:</span>
<span style="left:1092px;top:323px;color:#dd00a9;font-family:'Liberation Sans',sans-serif;font-size:12px;transform:translateX(0.83px) scaleX(0.9826);">Accept</span>
<span style="left:1062px;top:344px;color:#0074e8;font-family:'Liberation Sans',sans-serif;font-size:12px;transform:translateX(0.48px) scaleX(1.0037);"><u style="width:63.00px;transform:scaleX(0.9943)">X-Powered-</u><u style="width:16.00px;transform:scaleX(0.9225)">By:</u></span>
<span style="left:1145px;top:344px;color:#dd00a9;font-family:'Liberation Sans',sans-serif;font-size:12px;transform:translateX(0.95px) scaleX(0.8826);">Express</span>
<span style="left:1062px;top:365px;color:#0074e8;font-family:'Liberation Sans',sans-serif;font-size:12px;transform:translateX(0.51px) scaleX(0.9901);"><u style="width:43.00px;transform:scaleX(0.9917)">X-Vcap-</u><u style="width:47.00px;transform:scaleX(0.9650)">Request-</u><u style="width:13.00px;transform:scaleX(0.9742)">Id:</u></span>
<span style="left:1169px;top:365px;color:#dd00a9;font-family:'Liberation Sans',sans-serif;font-size:12px;transform:translateX(0.32px) scaleX(1.0016);"><u style="width:51.00px;transform:scaleX(0.9436)">0f73a377-</u><u style="width:31.00px;transform:scaleX(1.0097)">7bb4-</u><u style="width:29.00px;transform:scaleX(0.9445)">407e-</u><u style="width:30.00px;transform:scaleX(0.9771)">479d-</u><u style="width:73.00px;transform:scaleX(0.9191)">5a0c8e367d47</u></span>
<span style="left:1062px;top:409px;color:#0074e8;font-family:'Liberation Sans',sans-serif;font-size:12px;transform:translateX(0.83px) scaleX(0.9947);">Accept:</span>
<span style="left:1106px;top:409px;color:#dd00a9;font-family:'Liberation Sans',sans-serif;font-size:12px;transform:translateX(0.97px) scaleX(1.2059);">*/*</span>
<span style="left:1062px;top:430px;color:#0074e8;font-family:'Liberation Sans',sans-serif;font-size:12px;transform:translateX(0.82px) scaleX(0.9996);"><u style="width:42.00px;transform:scaleX(1.0323)">Accept-</u><u style="width:53.00px;transform:scaleX(0.9930)">Encoding:</u></span>
<span style="left:1162px;top:430px;color:#dd00a9;font-family:'Liberation Sans',sans-serif;font-size:12px;transform:translateX(0.59px) scaleX(0.9944);"><u style="width:28.00px;transform:scaleX(0.9760)">gzip, </u><u style="width:53.00px;transform:scaleX(0.9930)">deflate, br</u></span>
<span style="left:1062px;top:451px;color:#0074e8;font-family:'Liberation Sans',sans-serif;font-size:12px;transform:translateX(0.82px) scaleX(0.9929);"><u style="width:42.00px;transform:scaleX(1.0323)">Accept-</u><u style="width:55.00px;transform:scaleX(0.9694)">Language:</u></span>
<span style="left:1164px;top:451px;color:#dd00a9;font-family:'Liberation Sans',sans-serif;font-size:12px;transform:translateX(0.59px) scaleX(1.0000);"><u style="width:14.00px;transform:scaleX(0.9124)">cs,</u><u style="width:47.00px;transform:scaleX(0.9586)">sk;q=0.8,</u><u style="width:18.00px;transform:scaleX(1.0378)">en-</u><u style="width:50.00px;transform:scaleX(0.9310)">US;q=0.5,</u><u style="width:46.00px;transform:scaleX(0.9777)">en;q=0.3</u></span>
<span style="left:1062px;top:472px;color:#0074e8;font-family:'Liberation Sans',sans-serif;font-size:12px;transform:translateX(0.44px) scaleX(1.0171);">Connection:</span>
<span style="left:1132px;top:472px;color:#dd00a9;font-family:'Liberation Sans',sans-serif;font-size:12px;transform:translateX(0.31px) scaleX(0.9945);">keep-alive</span>
<span style="left:1062px;top:493px;color:#0074e8;font-family:'Liberation Sans',sans-serif;font-size:12px;transform:translateX(0.02px) scaleX(1.0386);">DNT:</span>
<span style="left:1094px;top:493px;color:#dd00a9;font-family:'Liberation Sans',sans-serif;font-size:12px;transform:translateX(0.98px) scaleX(0.6612);">1</span>
<span style="left:1062px;top:514px;color:#0074e8;font-family:'Liberation Sans',sans-serif;font-size:12px;transform:translateX(0.18px) scaleX(1.0081);">Host:</span>
<span style="left:1095px;top:514px;color:#dd00a9;font-family:'Liberation Sans',sans-serif;font-size:12px;transform:translateX(0.50px) scaleX(1.0061);"><u style="width:96.00px;transform:scaleX(1.0428)">cloudfoundrytest-</u><u style="width:43.00px;transform:scaleX(0.9483)">restless-</u><u style="width:67.00px;transform:scaleX(0.9565)">tige…cfapps.</u><u style="width:28.00px;transform:scaleX(0.9324)">eu10.</u><u style="width:29.00px;transform:scaleX(0.9657)">hana.</u><u style="width:60.00px;transform:scaleX(0.9992)">ondemand.</u><u style="width:23.00px;transform:scaleX(1.0145)">com</u></span>
<span style="left:1062px;top:535px;color:#0074e8;font-family:'Liberation Sans',sans-serif;font-size:12px;transform:translateX(0.22px) scaleX(0.9307);">Referer:</span>
<span style="left:1107px;top:535px;color:#dd00a9;font-family:'Liberation Sans',sans-serif;font-size:12px;font-style:italic;transform:translateX(0.76px) scaleX(0.9968);"><u style="width:40.00px;transform:scaleX(1.1101)">https://</u><u style="width:96.00px;transform:scaleX(1.0428)">cloudfoundrytest-</u><u style="width:57.00px;transform:scaleX(0.8902)">restles…10.</u><u style="width:29.00px;transform:scaleX(0.9657)">hana.</u><u style="width:60.00px;transform:scaleX(0.9992)">ondemand.</u><u style="width:28.00px;transform:scaleX(1.0763)">com/</u><u style="width:47.00px;transform:scaleX(1.0358)">webapp/</u></span>
<span style="left:1062px;top:556px;color:#0074e8;font-family:'Liberation Sans',sans-serif;font-size:12px;transform:translateX(0.25px) scaleX(1.0028);"><u style="width:28.00px;transform:scaleX(0.9542)">User-</u><u style="width:35.00px;transform:scaleX(1.0086)">Agent:</u></span>
<span style="left:1130px;top:556px;color:#dd00a9;font-family:'Liberation Sans',sans-serif;font-size:12px;transform:translateX(0.18px) scaleX(1.0019);"><u style="width:61.00px;transform:scaleX(1.0049)">Mozilla/5.0 </u><u style="width:74.00px;transform:scaleX(0.9850)">(Windows NT </u><u style="width:43.00px;transform:scaleX(0.8712)">10.0; …) </u><u style="width:38.00px;transform:scaleX(0.9996)">Gecko/</u><u style="width:51.00px;transform:scaleX(0.8989)">20100101 </u><u style="width:41.00px;transform:scaleX(1.0246)">Firefox/</u><u style="width:21.00px;transform:scaleX(0.8990)">61.0</u></span>
<span style="left:1062px;top:577px;color:#0074e8;font-family:'Liberation Sans',sans-serif;font-size:12px;transform:translateX(0.51px) scaleX(1.0018);"><u style="width:72.00px;transform:scaleX(0.9724)">X-Requested-</u><u style="width:28.00px;transform:scaleX(1.0240)">With:</u></span>
<span style="left:1167px;top:577px;color:#dd00a9;font-family:'Liberation Sans',sans-serif;font-size:12px;transform:translateX(0.01px) scaleX(0.9828);">XMLHttpRequest</span>
<span style="left:46px;top:922px;color:#38383d;font-family:'Liberation Sans',sans-serif;font-size:12px;transform:translateX(0.14px) scaleX(0.9646);">3 požadavky</span>
<span style="left:131px;top:922px;color:#38383d;font-family:'Liberation Sans',sans-serif;font-size:12px;transform:translateX(0.72px) scaleX(1.0013);"><u style="width:61.00px;transform:scaleX(0.9425)">Přeneseno: </u><u style="width:49.00px;transform:scaleX(0.9297)">5,85 KB / </u><u style="width:38.00px;transform:scaleX(0.8899)">4,55 KB</u></span>
<span style="left:301px;top:922px;color:#38383d;font-family:'Liberation Sans',sans-serif;font-size:12px;transform:translateX(0.18px) scaleX(1.0131);"><u style="width:57.00px;transform:scaleX(0.9935)">Hotovo za </u><u style="width:36.00px;transform:scaleX(0.9146)">300 ms</u></span>
</div>
<svg style="left:1120px;top:80px" width="500" height="24" viewBox="0 0 500 24" ><path d="M5.6 8.2L60 8.3L120 8.6L240 9.4L300 9.2L370 8.5L420 7.8L476 7.6L478 9L481 11.5L486 14.5L484 15.6L477 16.8L370 16.5L240 16.1L120 16.3L5.8 16.1Z" fill="#ff0000"/><path d="M388 7.2C420 6.6 450 6.6 476 7.4" fill="none" stroke="#ff0000" stroke-width="1.6" stroke-linecap="round"/></svg>
<div class="b" style="left:1601px;top:71px;width:108px;height:39px;box-sizing:border-box;border:3px solid #ff0000;border-radius:1.5px"></div>
<svg style="left:1100px;top:530px" width="320" height="24" viewBox="0 0 320 24" ><path d="M8 10.7C80 10.4 200 10.6 309 11.2" fill="none" stroke="#ff0000" stroke-width="2.8" stroke-linecap="round"/><path d="M7.5 13.8C90 13.7 200 13.8 308 14.2" fill="none" stroke="#ff0000" stroke-width="2.2" stroke-linecap="round"/><path d="M232 12.3C260 12.2 290 12.4 308.5 12.6" fill="none" stroke="#ff0000" stroke-width="5.6" stroke-linecap="round"/></svg>
</body>
</html>
